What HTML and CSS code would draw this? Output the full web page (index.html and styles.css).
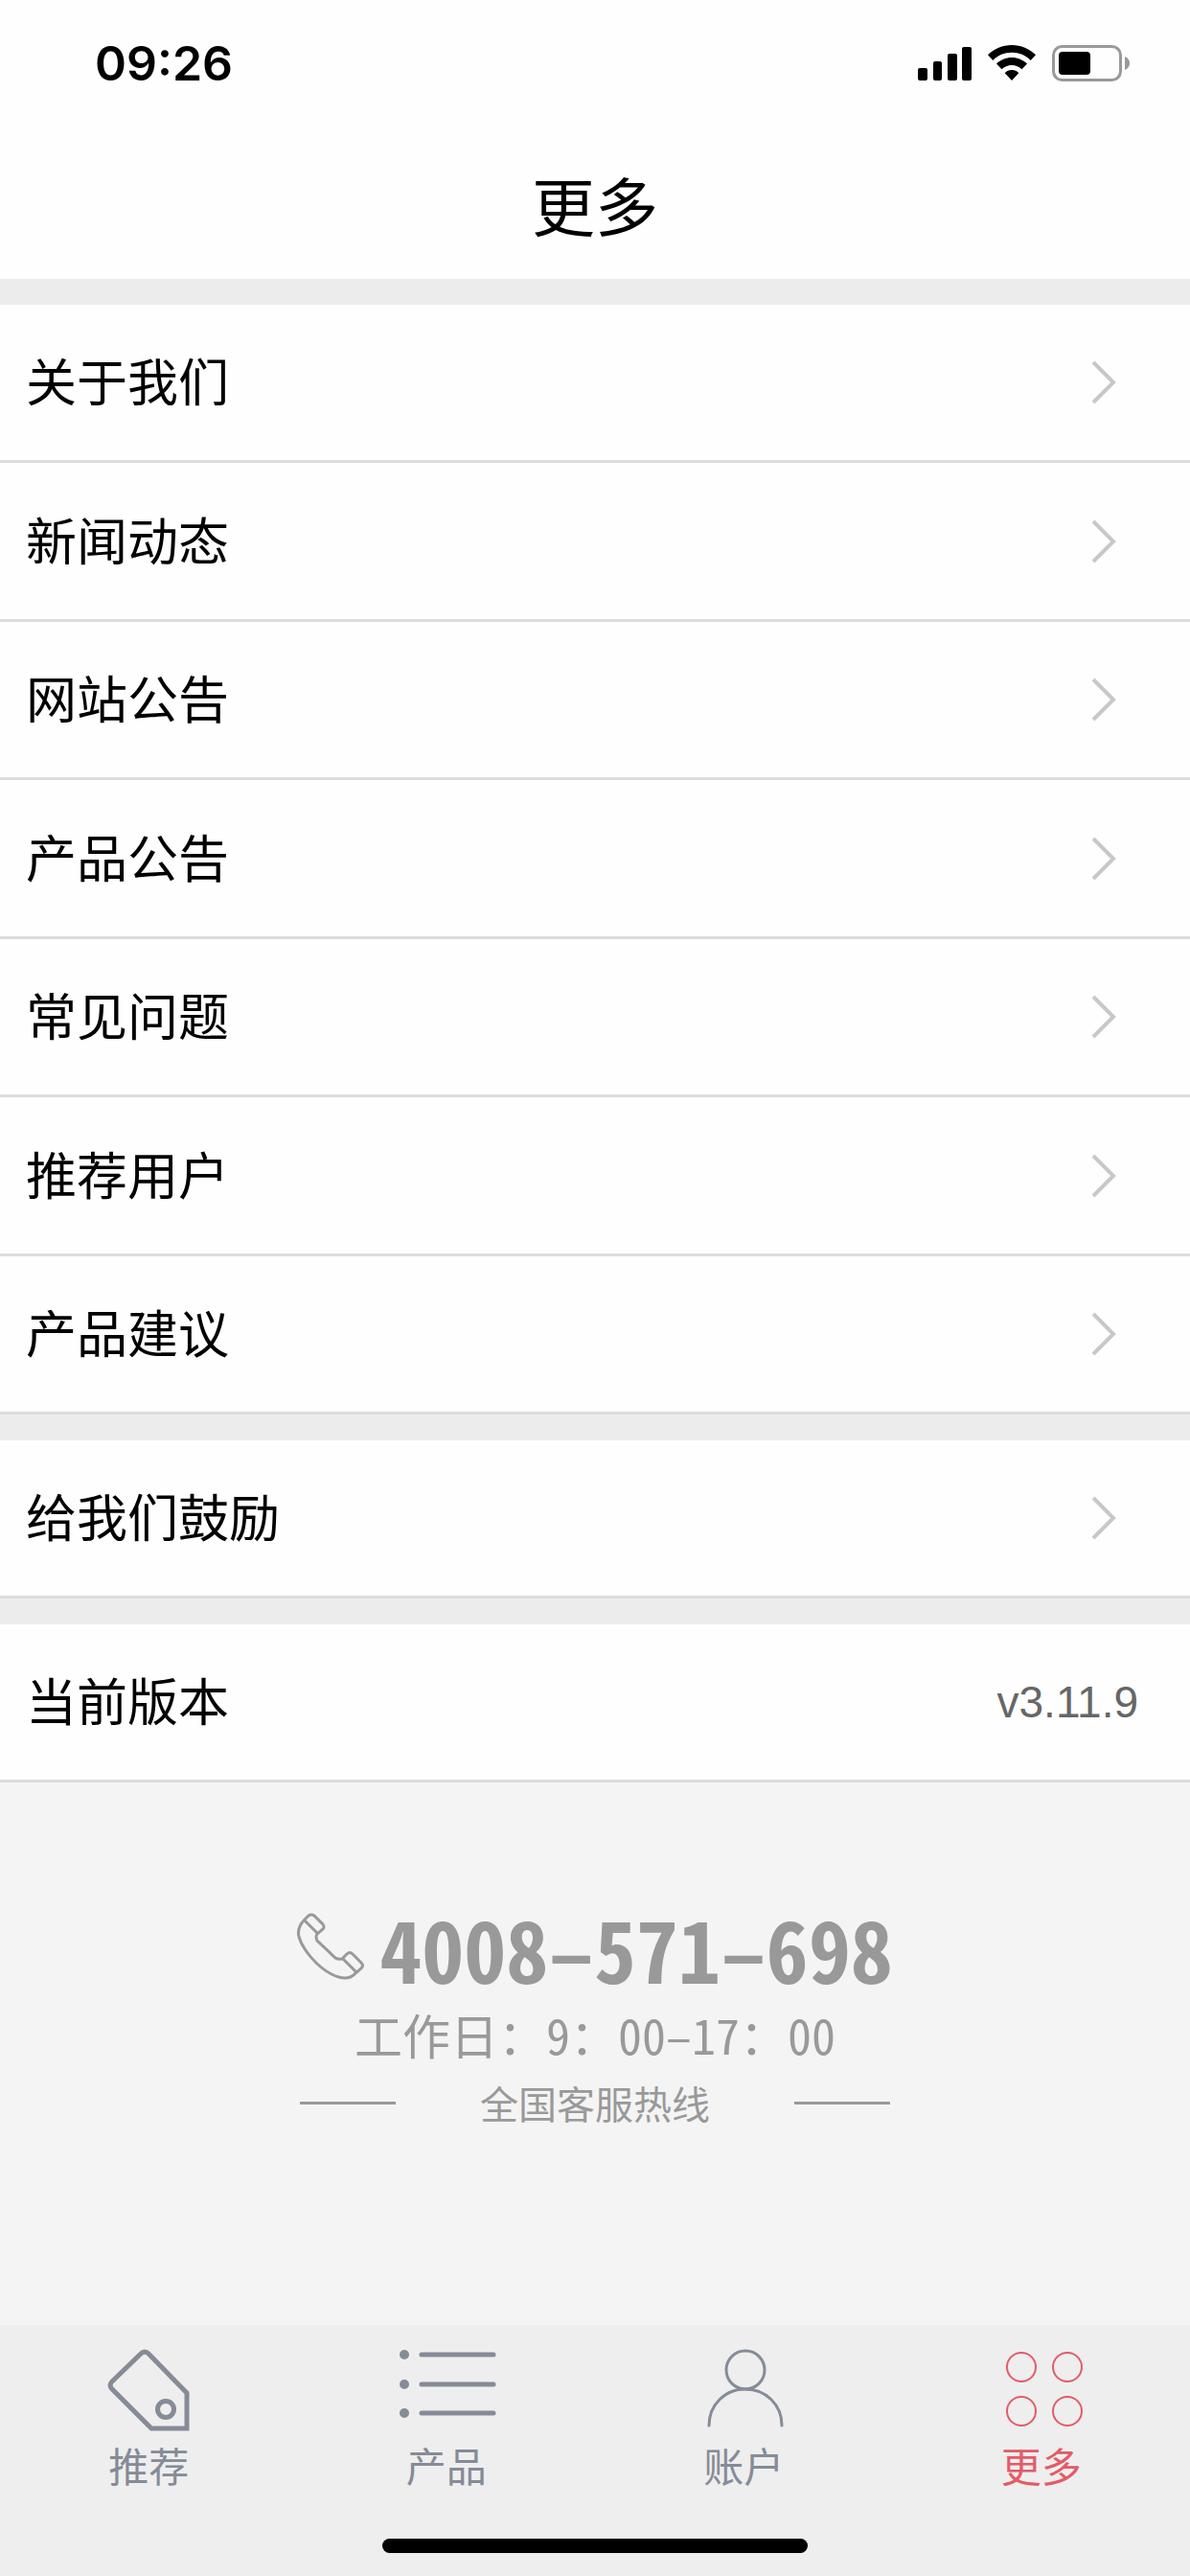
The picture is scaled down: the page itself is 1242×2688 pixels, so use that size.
FILE: index.html
```html
<!DOCTYPE html>
<html lang="zh-CN">
<head>
    <meta charset="UTF-8">
    <meta name="viewport" content="width=device-width, initial-scale=1.0">
    <title>更多</title>
    <link rel="stylesheet" href="styles.css">
</head>
<body>
    <div class="status-bar">
        <span class="status-time">09:26</span>
        <div class="status-icons">
            <svg class="icon-signal" width="56" height="38" viewBox="0 0 56 38">
                <rect x="0" y="24" width="10" height="13" rx="2"/>
                <rect x="16" y="17" width="9" height="20" rx="2"/>
                <rect x="31" y="9" width="10" height="28" rx="2"/>
                <rect x="46" y="2" width="10" height="35" rx="2"/>
            </svg>
            <svg class="icon-wifi" width="50" height="38" viewBox="0 0 50 38">
                <path d="M25 0C15.500 0 6.500 3.800 0 10.300L5.300 16C10.500 10.700 17.500 7.800 25 7.800S39.500 10.700 44.700 16L50 10.300C43.500 3.800 34.500 0 25 0Z"/>
                <path d="M25 13C19 13 13.300 15.400 9 19.500L14.500 25.300C17.300 22.500 21 20.900 25 20.900S32.700 22.500 35.500 25.300L41 19.500C36.700 15.400 31 13 25 13Z"/>
                <path d="M25 26C22.200 26 19.600 27.200 17.700 29.200L25 37L32.300 29.200C30.400 27.200 27.800 26 25 26Z"/>
            </svg>
            <svg class="icon-battery" width="82" height="38" viewBox="0 0 82 38">
                <rect x="1.500" y="1.500" width="70" height="35" rx="9" fill="none" stroke="#999" stroke-width="3"/>
                <rect x="7" y="7" width="33" height="24" rx="4"/>
                <path d="M76 12C79.500 13.500 81 16 81 19S79.500 24.500 76 26Z" fill="#999"/>
            </svg>
        </div>
    </div>

    <header class="header">
        <h1>更多</h1>
    </header>

    <main class="content">
        <ul class="menu">
            <li><a class="menu-item" href="#about"><span class="label">关于我们</span><svg class="arrow" viewBox="0 0 26 46"><path d="M2 2L23 23L2 44"/></svg></a></li>
            <li><a class="menu-item" href="#news"><span class="label">新闻动态</span><svg class="arrow" viewBox="0 0 26 46"><path d="M2 2L23 23L2 44"/></svg></a></li>
            <li><a class="menu-item" href="#site-notice"><span class="label">网站公告</span><svg class="arrow" viewBox="0 0 26 46"><path d="M2 2L23 23L2 44"/></svg></a></li>
            <li><a class="menu-item" href="#product-notice"><span class="label">产品公告</span><svg class="arrow" viewBox="0 0 26 46"><path d="M2 2L23 23L2 44"/></svg></a></li>
            <li><a class="menu-item" href="#faq"><span class="label">常见问题</span><svg class="arrow" viewBox="0 0 26 46"><path d="M2 2L23 23L2 44"/></svg></a></li>
            <li><a class="menu-item" href="#invite"><span class="label">推荐用户</span><svg class="arrow" viewBox="0 0 26 46"><path d="M2 2L23 23L2 44"/></svg></a></li>
            <li><a class="menu-item" href="#suggest"><span class="label">产品建议</span><svg class="arrow" viewBox="0 0 26 46"><path d="M2 2L23 23L2 44"/></svg></a></li>
        </ul>
        <ul class="menu">
            <li><a class="menu-item" href="#rate"><span class="label">给我们鼓励</span><svg class="arrow" viewBox="0 0 26 46"><path d="M2 2L23 23L2 44"/></svg></a></li>
        </ul>
        <ul class="menu">
            <li class="menu-item"><span class="label">当前版本</span><span class="version">v3.11.9</span></li>
        </ul>

        <section class="hotline">
            <a class="hotline-phone" href="tel:4008571698">
                <svg class="icon-phone" viewBox="0 0 70 70">
                    <path d="M8 6L12 2Q15 0 18 2L27 11Q29 14 27 16L21 21Q19 24 21 28L40 46Q43 48 47 47L52 42Q55 39 58 42L67 51Q70 54 67 57L61 62C55 69 46 68 36 63C22 56 6 38 2 24C0 16 3 11 8 6Z"/>
                    <path d="M8 7L22 21M48 47L62 61"/>
                </svg>
                <span>4008–571–698</span>
            </a>
            <p class="hotline-time">工作日：9：00–17：00</p>
            <p class="hotline-name">全国客服热线</p>
        </section>
    </main>

    <nav class="tab-bar">
        <a class="tab" href="#recommend">
            <svg class="tab-icon" viewBox="0 0 104 88">
                <path d="M44 6L14 35Q10 39 14 43L55 84H92V47L52 6Q48 2 44 6Z" stroke-width="5"/>
                <circle cx="70" cy="64" r="8.500" stroke-width="5"/>
            </svg>
            <span>推荐</span>
        </a>
        <a class="tab" href="#products">
            <svg class="tab-icon" viewBox="0 0 104 88">
                <path d="M26 7H101M26 38H101M26 68H101" stroke-width="5"/>
                <path d="M8 7H8M8 38H8M8 68H8" stroke-width="10"/>
            </svg>
            <span>产品</span>
        </a>
        <a class="tab" href="#account">
            <svg class="tab-icon" viewBox="0 0 104 88">
                <circle cx="54" cy="23" r="20" stroke-width="3"/>
                <path d="M16 81C16 59 33 43 54 43S92 59 92 81" stroke-width="3"/>
            </svg>
            <span>账户</span>
        </a>
        <a class="tab active" href="#more">
            <svg class="tab-icon" viewBox="0 0 104 88">
                <g stroke-width="2">
                    <circle cx="31" cy="20" r="15"/>
                    <circle cx="79" cy="20" r="15"/>
                    <circle cx="31" cy="66" r="15"/>
                    <circle cx="79" cy="66" r="15"/>
                </g>
            </svg>
            <span>更多</span>
        </a>
    </nav>
    <div class="home-indicator"></div>
</body>
</html>
```

FILE: styles.css
```css
* {
    margin: 0;
    padding: 0;
    box-sizing: border-box;
}

body {
    display: flex;
    flex-direction: column;
    min-height: 100vh;
    background: #f4f4f4;
    color: #000;
    font-family: "Noto Sans CJK SC", sans-serif;
}

a {
    color: inherit;
    text-decoration: none;
}

ul {
    list-style: none;
}

.status-bar {
    display: flex;
    justify-content: space-between;
    align-items: center;
    height: 132px;
    padding: 0 62px 0 99px;
    background: #fefefe;
}

.status-time {
    font-family: Inter, sans-serif;
    font-size: 50px;
    font-weight: 600;
}

.status-icons {
    display: flex;
    gap: 17px;
}

/* header */
.header {
    display: flex;
    justify-content: center;
    align-items: center;
    height: 159px;
    background: #fefefe;
}

.header h1 {
    font-size: 66px;
    font-weight: 400;
    line-height: 96px;
}

/* menu list */
.content {
    flex: 1;
}

.menu {
    border-top: 27px solid #ececec;
    background: #fefefe;
}

.menu-item {
    display: flex;
    justify-content: space-between;
    align-items: center;
    min-height: 165px;
    padding: 0 54px 0 27px;
    border-bottom: 3px solid #dcdcdc;
    font-size: 53px;
    line-height: 80px;
}

.menu li:nth-child(even) .menu-item {
    min-height: 166px;
}

.label {
    padding-bottom: 6px;
}

.arrow {
    width: 26px;
    height: 46px;
    margin-right: 23px;
    fill: none;
    stroke: #c8c8c8;
    stroke-width: 4;
}

.version {
    color: #666;
    font-family: "Liberation Sans", Arial, sans-serif;
    font-size: 46px;
}

/* service hotline */
.hotline {
    display: flex;
    flex-direction: column;
    align-items: center;
    padding: 132px 0;
    color: #999;
}

.hotline-phone {
    display: flex;
    align-items: flex-start;
    gap: 16px;
    padding-bottom: 14px;
    font-family: "Noto Sans Mono CJK SC", "Noto Sans CJK SC", sans-serif;
    font-size: 88px;
    font-weight: 700;
    line-height: 80px;
}

.icon-phone {
    width: 70px;
    height: 70px;
    margin-top: 5px;
    fill: none;
    stroke: #999;
    stroke-width: 3;
    overflow: visible;
}

.hotline-time {
    font-family: "Noto Sans Mono CJK SC", "Noto Sans CJK SC", sans-serif;
    font-size: 50px;
    line-height: 72px;
}

.hotline-name {
    display: flex;
    align-items: center;
    gap: 88px;
    font-size: 40px;
    line-height: 72px;
}

.hotline-name::before,
.hotline-name::after {
    content: "";
    width: 100px;
    height: 3px;
    background: #999;
}

/* bottom tabs */
.tab-bar {
    display: grid;
    grid-template-columns: repeat(4, 1fr);
    padding-top: 24px;
    background: #eee;
}

.tab {
    display: flex;
    flex-direction: column;
    align-items: center;
    gap: 4px;
    color: #858b97;
    font-size: 42px;
    line-height: 60px;
}

.tab.active {
    color: #e45b68;
}

.tab-icon {
    width: 104px;
    height: 88px;
    fill: none;
    stroke: currentColor;
    stroke-linecap: round;
}

.home-indicator {
    padding: 47px 0 24px;
    background: #eee;
}

.home-indicator::before {
    content: "";
    display: block;
    width: 444px;
    height: 15px;
    margin: 0 auto;
    border-radius: 8px;
    background: #000;
}
```
